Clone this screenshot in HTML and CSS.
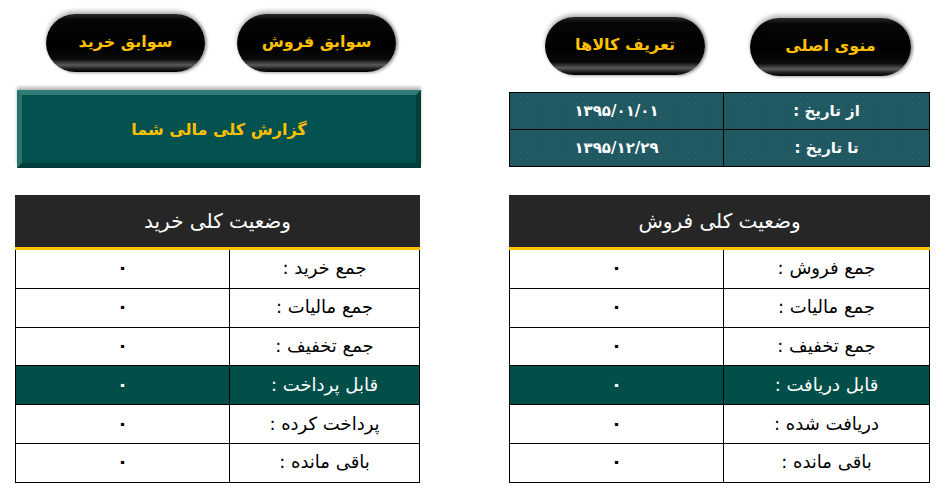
FILE: index.html
```html
<!DOCTYPE html>
<html lang="fa">
<head>
<meta charset="utf-8">
<title>گزارش کلی مالی شما</title>
<link rel="stylesheet" href="styles.css">
</head>
<body>
<div class="page">
  <div class="btn-row btn-row-left">
    <a class="pill pill-a" dir="rtl">سوابق خرید</a>
    <a class="pill pill-b" dir="rtl">سوابق فروش</a>
  </div>
  <div class="btn-row btn-row-right">
    <a class="pill pill-c" dir="rtl">تعریف کالاها</a>
    <a class="pill pill-d" dir="rtl">منوی اصلی</a>
  </div>

  <div class="banner" dir="rtl">گزارش کلی مالی شما</div>

  <div class="dates">
    <div class="drow">
      <div class="dval">۱۳۹۵/۰۱/۰۱</div>
      <div class="dlabel" dir="rtl">از تاریخ :</div>
    </div>
    <div class="drow">
      <div class="dval">۱۳۹۵/۱۲/۲۹</div>
      <div class="dlabel" dir="rtl">تا تاریخ :</div>
    </div>
  </div>

  <div class="status status-buy">
    <div class="shead" dir="rtl">وضعیت کلی خرید</div>
    <div class="srow"><div class="sval">۰</div><div class="slabel" dir="rtl">جمع خرید :</div></div>
    <div class="srow"><div class="sval">۰</div><div class="slabel" dir="rtl">جمع مالیات :</div></div>
    <div class="srow"><div class="sval">۰</div><div class="slabel" dir="rtl">جمع تخفیف :</div></div>
    <div class="srow hl"><div class="sval">۰</div><div class="slabel" dir="rtl">قابل پرداخت :</div></div>
    <div class="srow"><div class="sval">۰</div><div class="slabel" dir="rtl">پرداخت کرده :</div></div>
    <div class="srow"><div class="sval">۰</div><div class="slabel" dir="rtl">باقی مانده :</div></div>
  </div>

  <div class="status status-sell">
    <div class="shead" dir="rtl">وضعیت کلی فروش</div>
    <div class="srow"><div class="sval">۰</div><div class="slabel" dir="rtl">جمع فروش :</div></div>
    <div class="srow"><div class="sval">۰</div><div class="slabel" dir="rtl">جمع مالیات :</div></div>
    <div class="srow"><div class="sval">۰</div><div class="slabel" dir="rtl">جمع تخفیف :</div></div>
    <div class="srow hl"><div class="sval">۰</div><div class="slabel" dir="rtl">قابل دریافت :</div></div>
    <div class="srow"><div class="sval">۰</div><div class="slabel" dir="rtl">دریافت شده :</div></div>
    <div class="srow"><div class="sval">۰</div><div class="slabel" dir="rtl">باقی مانده :</div></div>
  </div>
</div>
</body>
</html>
```

FILE: styles.css
```css
html, body {
  margin: 0;
  padding: 0;
  background: #ffffff;
  font-family: "DejaVu Sans", "Noto Sans", sans-serif;
}

.page {
  display: grid;
  grid-template-columns: 406px 421px;
  grid-template-rows: 76px 105px auto;
  column-gap: 88px;
  padding: 14px 0 0 15px;
}

.btn-row {
  display: flex;
  align-items: flex-start;
}
.btn-row-left {
  padding-left: 31px;
  gap: 32px;
}
.btn-row-right {
  padding-left: 36px;
  gap: 45px;
}

.pill {
  display: flex;
  align-items: center;
  justify-content: center;
  width: 159px;
  height: 58px;
  box-sizing: border-box;
  border-radius: 29px;
  background: linear-gradient(180deg, #2a2a2a 0%, #060606 10%, #000 55%, #0a0a0a 78%, #5a5a5a 88%, #1a1a1a 95%, #000 100%);
  box-shadow: 0 -3px 4px rgba(0, 0, 0, 0.28), 2px 1px 3px rgba(0, 0, 0, 0.35);
  color: #ffc000;
  font-size: 16px;
  font-weight: bold;
  text-decoration: none;
  padding-bottom: 4px;
}
.pill-c { width: 160px; margin-top: 3px; }
.pill-d { width: 161px; margin-top: 4px; }

.banner {
  margin-left: 2px;
  width: 404px;
  height: 78px;
  box-sizing: border-box;
  background: #03524f;
  border-style: solid;
  border-width: 5px;
  border-color: #2f7d76 #013e3b #013e3b #2a746e;
  box-shadow: 0 -3px 3px rgba(0, 0, 0, 0.28);
  display: flex;
  align-items: center;
  justify-content: center;
  color: #ffc000;
  font-size: 16px;
  font-weight: bold;
}

.dates {
  margin-top: 2px;
  width: 421px;
  height: 75px;
  box-sizing: border-box;
  border: 1px solid #000;
  background-color: #215963;
  background-image: radial-gradient(rgba(255, 255, 255, 0.08) 0.6px, transparent 0.9px);
  background-size: 7px 7px;
  display: flex;
  flex-direction: column;
}
.drow {
  flex: 1;
  display: grid;
  grid-template-columns: 213px 1fr;
}
.drow + .drow {
  border-top: 1px solid #000;
}
.dval, .dlabel {
  display: flex;
  align-items: center;
  justify-content: center;
  color: #ffffff;
  font-size: 15px;
  font-weight: bold;
}
.dlabel {
  border-left: 1px solid #000;
}

.status {
  width: 405px;
}
.status-sell {
  width: 421px;
}
.shead {
  height: 51px;
  background: #262626;
  border-bottom: 3px solid #ffc000;
  display: flex;
  align-items: center;
  justify-content: center;
  color: #ffffff;
  font-size: 20px;
  padding-bottom: 1px;
  box-sizing: content-box;
}
.srow {
  display: grid;
  grid-template-columns: 213px 1fr;
  height: 37.8px;
  border-left: 1px solid #000;
  border-right: 1px solid #000;
  border-bottom: 1px solid #000;
  background: #ffffff;
}
.sval, .slabel {
  display: flex;
  align-items: center;
  justify-content: center;
  color: #000;
  font-size: 18px;
  padding-bottom: 2px;
}
.sval {
  font-weight: bold;
}
.slabel {
  border-left: 1px solid #000;
}
.srow.hl {
  background: #024f4a;
}
.srow.hl .sval, .srow.hl .slabel {
  color: #ffffff;
}
```
